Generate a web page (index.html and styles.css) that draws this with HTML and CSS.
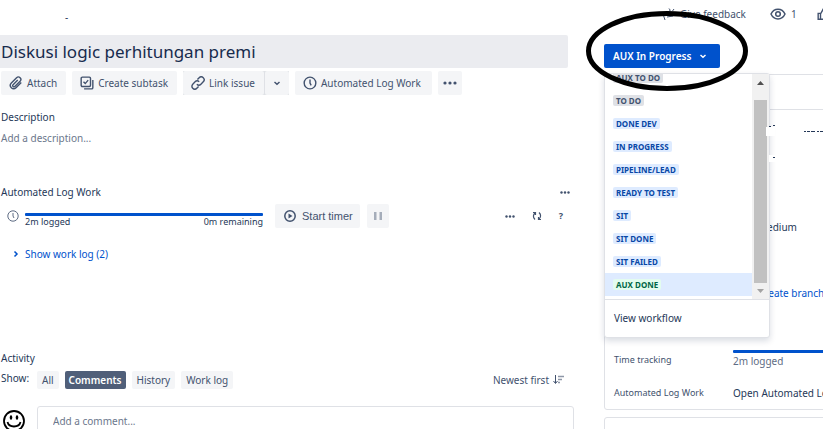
FILE: index.html
```
<!DOCTYPE html>
<html lang="en">
<head>
  <meta charset="UTF-8">
  <meta name="viewport" content="width=device-width, initial-scale=1.0">
  <title>Diskusi logic perhitungan premi</title>
  <link rel="stylesheet" href="styles.css">
</head>
<body>

<div class="issue">
  <main class="content">
    <div class="breadcrumb">-</div>
    <h1>Diskusi logic perhitungan premi</h1>

    <div class="toolbar">
      <button type="button" class="btn">
        <svg width="14" height="14" viewBox="0 0 24 24"><path d="M21 11l-9 9a5.500 5.500 0 0 1-8-8l9-9a4 4 0 0 1 6 6l-9 9a2 2 0 0 1-3-3l8-8"/></svg>
        Attach
      </button>
      <button type="button" class="btn">
        <svg width="14" height="14" viewBox="0 0 24 24"><rect x="2" y="2" width="16" height="16" rx="2"/><path d="M6 10l3 3 5-6M22 7v13a2 2 0 0 1-2 2H7"/></svg>
        Create subtask
      </button>
      <div class="btn-split">
        <button type="button" class="btn">
          <svg width="14" height="14" viewBox="0 0 24 24"><path d="M10 14a5 5 0 0 0 7 0l4-4a4.600 4.600 0 0 0-7-7l-3 3M14 10a5 5 0 0 0-7 0l-4 4a4.600 4.600 0 0 0 7 7l3-3"/></svg>
          Link issue
        </button>
        <button type="button" class="btn btn-arrow" aria-label="More link options">
          <svg width="8" height="8" viewBox="0 0 8 8"><path class="thin" d="M1.500 3L4 5.200 6.500 3"/></svg>
        </button>
      </div>
      <button type="button" class="btn btn-log">
        <svg width="14" height="14" viewBox="0 0 24 24"><circle cx="12" cy="12" r="10"/><path d="M12 6v6l2 4"/></svg>
        Automated Log Work
      </button>
      <button type="button" class="btn btn-more" aria-label="More actions">
        <svg width="14" height="4" viewBox="0 0 14 4"><g class="fill"><circle cx="2" cy="2" r="1.600"/><circle cx="7" cy="2" r="1.600"/><circle cx="12" cy="2" r="1.600"/></g></svg>
      </button>
    </div>

    <section class="description">
      <h2>Description</h2>
      <p>Add a description...</p>
    </section>

    <section class="worklog">
      <div class="section-head">
        <h2>Automated Log Work</h2>
        <button type="button" class="icon-btn" aria-label="Panel options">
          <svg width="10" height="3" viewBox="0 0 10 3"><g class="fill"><circle cx="1.500" cy="1.500" r="1.200"/><circle cx="5" cy="1.500" r="1.200"/><circle cx="8.500" cy="1.500" r="1.200"/></g></svg>
        </button>
      </div>

      <div class="timer">
        <svg class="timer-clock" width="12" height="12" viewBox="0 0 12 12"><circle class="line" cx="6" cy="6" r="5.200"/><path class="line" d="M6 3v3l1 2"/></svg>
        <div class="progress">
          <div class="bar"></div>
          <div class="progress-text"><span>2m logged</span><span>0m remaining</span></div>
        </div>
        <button type="button" class="btn btn-start">
          <svg width="12" height="12" viewBox="0 0 12 12"><circle class="thin" cx="6" cy="6" r="5.200"/><path class="fill" d="M4.500 3.500v5L8.500 6z"/></svg>
          Start timer
        </button>
        <button type="button" class="btn btn-pause" aria-label="Pause" disabled>
          <svg width="8" height="8" viewBox="0 0 8 8"><path class="fill" d="M0 0h2.500v8H0zM5.500 0H8v8H5.500z"/></svg>
        </button>
        <div class="timer-tools">
          <button type="button" class="icon-btn" aria-label="More">
            <svg width="10" height="3" viewBox="0 0 10 3"><g class="fill"><circle cx="1.500" cy="1.500" r="1.200"/><circle cx="5" cy="1.500" r="1.200"/><circle cx="8.500" cy="1.500" r="1.200"/></g></svg>
          </button>
          <button type="button" class="icon-btn" aria-label="Refresh">
            <svg width="10" height="10" viewBox="0 0 10 10"><path class="refresh" d="M1 1.500h2.500V4M3.500 1.500C.8 3.500.8 6.500 3 8.500M9 8.500H6.500V6M6.500 8.500C9.200 6.500 9.200 3.500 7 1.500"/></svg>
          </button>
          <button type="button" class="icon-btn help">?</button>
        </div>
      </div>

      <a href="#" class="show-log">
        <svg width="6" height="8" viewBox="0 0 6 8"><path class="thin" d="M1.500 1.500L4 4 1.500 6.500"/></svg>
        Show work log (2)
      </a>
    </section>

    <section class="activity">
      <h2>Activity</h2>
      <div class="filters">
        <span class="show">Show:</span>
        <button type="button" class="tab">All</button>
        <button type="button" class="tab active">Comments</button>
        <button type="button" class="tab">History</button>
        <button type="button" class="tab">Work log</button>
        <button type="button" class="sort">
          Newest first
          <svg width="11" height="10" viewBox="0 0 11 10"><path class="line" d="M2.500 0v8M.5 6l2 2.500 2-2.500"/><path class="sort-lines" d="M5 1.500h6M5 4.500h4M5 7.500h2"/></svg>
        </button>
      </div>
      <div class="comment">
        <svg class="avatar" width="22" height="22" viewBox="0 0 22 22"><circle cx="11" cy="11" r="10"/><path d="M4.500 12c1.500 6 11.500 6 13 0"/><g><ellipse cx="8" cy="7.500" rx="1.300" ry="2.200"/><ellipse cx="14" cy="7.500" rx="1.300" ry="2.200"/></g></svg>
        <input type="text" placeholder="Add a comment..." aria-label="Add a comment">
      </div>
    </section>
  </main>

  <aside class="sidebar">
    <div class="top-actions">
      <button type="button" class="link-btn">
        <svg width="14" height="14" viewBox="0 0 14 14"><path class="line" d="M1 7l2 6M1.500 8L8 3.500M7 1.500l1.500 2M10.500 4l1.500-2M5 10l6-1"/></svg>
        Give feedback
      </button>
      <button type="button" class="link-btn watch">
        <svg width="16" height="12" viewBox="0 0 16 12"><path class="thin" d="M1 6c3-6.500 11-6.500 14 0-3 6.500-11 6.500-14 0z"/><circle class="thin" cx="8" cy="6" r="2.300"/></svg>
        1
      </button>
      <button type="button" class="link-btn like" aria-label="Like">
        <svg width="14" height="14" viewBox="0 0 24 24"><path d="M2 11h4v10H2zM6 12l5-9c3 0 3 2 2 6h8l-2 12H6"/></svg>
      </button>
    </div>

    <div class="status">
      <button type="button" class="status-btn">
        AUX In Progress
        <svg width="8" height="8" viewBox="0 0 8 8"><path class="thin" d="M1.500 3L4 5.200 6.500 3"/></svg>
      </button>

      <div class="menu">
        <div class="menu-scroll">
          <ul>
            <li><span class="badge">AUX TO DO</span></li>
            <li><span class="badge">TO DO</span></li>
            <li><span class="badge blue">DONE DEV</span></li>
            <li><span class="badge blue">IN PROGRESS</span></li>
            <li><span class="badge blue">PIPELINE/LEAD</span></li>
            <li><span class="badge blue">READY TO TEST</span></li>
            <li><span class="badge blue">SIT</span></li>
            <li><span class="badge blue">SIT DONE</span></li>
            <li><span class="badge blue">SIT FAILED</span></li>
            <li class="selected"><span class="badge green">AUX DONE</span></li>
          </ul>
          <div class="scrollbar">
            <svg width="7" height="4" viewBox="0 0 7 4"><path class="arrow-up" d="M0 4l3.500-4L7 4z"/></svg>
            <div class="thumb"></div>
            <svg width="7" height="4" viewBox="0 0 7 4"><path class="arrow-down" d="M0 0l3.500 4L7 0z"/></svg>
          </div>
        </div>
        <a href="#" class="workflow">View workflow</a>
      </div>

      <!-- hand-drawn marks over the panel -->
      <svg class="circle-mark" width="164" height="84" viewBox="0 0 164 84"><ellipse cx="82" cy="42" rx="78.500" ry="37.500"/></svg>
      <svg class="erased" width="58" height="40" viewBox="0 0 58 40"><path class="rub" d="M0 5h9v9H0zM3 33h7v7H3z"/><path class="dash" stroke-dasharray="2 1 3 1 4 2" d="M38 9.500h20"/><path class="dash" d="M3 4.500h2M7 3.500h2M7 35.500h2"/></svg>
    </div>

    <div class="card details">
      <div class="card-head"></div>
      <dl>
        <div class="field priority"><dt></dt><dd>Medium</dd></div>
        <div class="field dev"><dt></dt><dd><a href="#">Create branch</a></dd></div>
        <div class="field tracking"><dt>Time tracking</dt><dd><div class="bar"></div><span class="logged">2m logged</span></dd></div>
        <div class="field"><dt>Automated Log Work</dt><dd>Open Automated Log Work</dd></div>
      </dl>
    </div>
    <div class="card next"></div>
  </aside>
</div>

</body>
</html>
```
FILE: styles.css
```
* {
  box-sizing: border-box;
}

body {
  margin: 0;
  background: #fff;
  color: #253858;
  font-family: 'Noto Sans', sans-serif;
  font-size: 10px;
  line-height: 16px;
  overflow: hidden;
}

h1, h2, p, ul, dl, dd {
  margin: 0;
  padding: 0;
}

h2 {
  font-size: 10px;
  font-weight: 400;
}

a {
  color: #0052cc;
  text-decoration: none;
}

button {
  font: inherit;
  color: #42526e;
  border: none;
  padding: 0;
  background: none;
  white-space: nowrap;
  display: flex;
  align-items: center;
  cursor: pointer;
}

svg {
  flex: none;
  fill: none;
  stroke: currentColor;
  stroke-width: 2.4;
}

svg .thin {
  stroke-width: 1.5;
}

svg .line {
  stroke-width: 1;
}

svg .fill {
  fill: currentColor;
  stroke: none;
}

.issue {
  display: grid;
  grid-template-columns: minmax(0, 1fr) 219px;
  gap: 30px;
}

/* left column */
.breadcrumb {
  height: 35px;
  padding: 9px 0 0 65px;
}

h1 {
  height: 33px;
  margin-right: 6px;
  padding-left: 1px;
  background: #ebecf0;
  border-radius: 0 2px 2px 0;
  color: #172b4d;
  font-size: 17px;
  font-weight: 400;
  line-height: 33px;
}

.toolbar {
  display: flex;
  gap: 6px;
  padding: 3px 0 0 1px;
}

.btn {
  height: 24px;
  padding: 0 9px 0 8px;
  gap: 4px;
  background: #f4f5f7;
  border-radius: 2px;
}

.btn-split {
  display: flex;
  gap: 1px;
  background: #dfe1e6;
}

.btn-arrow {
  padding: 0 8px;
}

.btn-log {
  padding-right: 11px;
}

.btn-more {
  padding: 0 5px;
}

.description {
  padding: 14px 0 0 1px;
}

.description p {
  margin-top: 5px;
  color: #6b778c;
}

.worklog {
  padding: 38px 0 0 1px;
}

.section-head {
  display: flex;
  justify-content: space-between;
  padding-right: 4px;
}

.timer {
  display: flex;
  align-items: center;
  margin-top: 4px;
  padding-left: 6px;
}

.timer-clock {
  margin-right: 6px;
  color: #5e6c84;
}

.progress {
  width: 238px;
  margin-right: 12px;
  padding-top: 9px;
}

.bar {
  height: 3px;
  background: #0052cc;
  border-radius: 1px;
}

.progress-text {
  display: flex;
  justify-content: space-between;
  font-size: 9px;
  line-height: 12px;
}

.btn-start {
  width: 85px;
  gap: 6px;
  padding: 0 9px;
  font-family: 'Liberation Sans', sans-serif;
  font-size: 11px;
}

.btn-pause {
  margin-left: 7px;
  padding: 0 7px;
  color: #a5adba;
}

.timer-tools {
  display: flex;
  align-items: center;
  gap: 17px;
  margin-left: auto;
  padding-right: 11px;
}

.refresh {
  stroke-width: 1.2;
}

.help {
  font-size: 9px;
  font-weight: 700;
}

.show-log {
  display: flex;
  align-items: center;
  gap: 6px;
  margin-top: 18px;
  padding-left: 12px;
}

.activity {
  padding: 88px 0 0 1px;
}

.filters {
  display: flex;
  align-items: center;
  margin-top: 4px;
  gap: 6px;
}

.show {
  width: 30px;
  padding-bottom: 4px;
}

.tab {
  height: 18px;
  padding: 0 5px;
  background: #f4f5f7;
  border-radius: 2px;
}

.tab.active {
  padding: 0 4px;
  background: #505f79;
  color: #fff;
  font-weight: 600;
}

.sort {
  gap: 4px;
  margin-left: auto;
  padding-right: 10px;
}

.sort-lines {
  stroke-width: 1.5;
  opacity: .6;
}

.comment {
  display: flex;
  align-items: center;
  gap: 12px;
  margin-top: 16px;
  padding-left: 2px;
}

.avatar {
  color: #000;
  stroke-width: 1.8;
}

.avatar g {
  fill: #000;
  stroke: none;
}

.comment input {
  flex: 1;
  min-width: 0;
  height: 30px;
  padding: 0 15px;
  border: 1px solid #dfe1e6;
  border-radius: 3px;
  font: inherit;
}

.comment input::placeholder {
  color: #6b778c;
}

/* right column */
.top-actions {
  display: flex;
  height: 44px;
  padding: 6px 0 22px 58px;
}

.link-btn {
  gap: 4px;
}

.watch {
  margin-left: 24px;
  gap: 5px;
}

.like {
  margin-left: 20px;
}

.status {
  position: relative;
}

.status-btn {
  width: 116px;
  height: 24px;
  padding: 0 13px 0 9px;
  justify-content: space-between;
  background: #0052cc;
  border-radius: 2px;
  color: #fff;
  font-weight: 600;
}

.menu {
  position: absolute;
  z-index: 1;
  top: 29px;
  left: 0;
  width: 166px;
  background: #fff;
  border: 1px solid #dfe1e6;
  border-radius: 3px;
  box-shadow: 0 3px 6px rgba(9, 30, 66, 0.15);
}

.menu-scroll {
  display: flex;
  height: 226px;
  overflow: hidden;
  border-bottom: 1px solid #dfe1e6;
}

.menu ul {
  flex: 1;
  display: flex;
  flex-direction: column;
  justify-content: flex-end;
  padding-bottom: 3px;
  list-style: none;
}

.menu li {
  display: flex;
  flex: none;
  align-items: center;
  height: 23px;
  padding-left: 8px;
}

.menu li.selected {
  background: #deebff;
}

.badge {
  padding: 0 3px;
  background: #dfe1e6;
  border-radius: 2px;
  color: #42526e;
  font-size: 8px;
  font-weight: 700;
  line-height: 11px;
}

.badge.blue {
  background: #deebff;
  color: #0747a6;
}

.badge.green {
  background: #e3fcef;
  color: #006644;
}

.scrollbar {
  display: flex;
  flex-direction: column;
  align-items: center;
  width: 17px;
  padding: 7px 0 6px;
  background: #f1f1f1;
}

.scrollbar svg {
  stroke: none;
}

.arrow-up {
  fill: #505050;
}

.arrow-down {
  fill: #a3a3a3;
}

.thumb {
  flex: 1;
  width: 13px;
  margin: 15px 0 6px;
  background: #c1c1c1;
}

.workflow {
  display: block;
  padding: 10px 9px 11px;
  color: #253858;
}

.circle-mark {
  position: absolute;
  z-index: 2;
  top: -35px;
  left: -19px;
  color: #000;
  stroke-width: 5;
  pointer-events: none;
}

.erased {
  position: absolute;
  z-index: 2;
  top: 78px;
  left: 162px;
  color: #253858;
  stroke-width: 1;
  pointer-events: none;
}

.rub {
  fill: #fff;
  stroke: none;
}

.card {
  margin-right: -20px;
  border: 1px solid #dfe1e6;
  border-radius: 3px;
}

.details {
  margin-top: 6px;
}

.card-head {
  height: 35px;
  border-bottom: 1px solid #dfe1e6;
}

.field {
  display: grid;
  grid-template-columns: 119px 1fr;
  align-items: center;
  height: 33px;
  padding-left: 9px;
  white-space: nowrap;
}

.field dt {
  color: #42526e;
  font-size: 9px;
}

.priority {
  margin-top: 100px;
}

.dev {
  margin-top: 33px;
}

.priority dd,
.dev dd {
  padding-left: 25px;
}

.tracking {
  margin-top: 34px;
}

.logged {
  color: #5e6c84;
}

.next {
  height: 40px;
  margin-top: 7px;
}
```
